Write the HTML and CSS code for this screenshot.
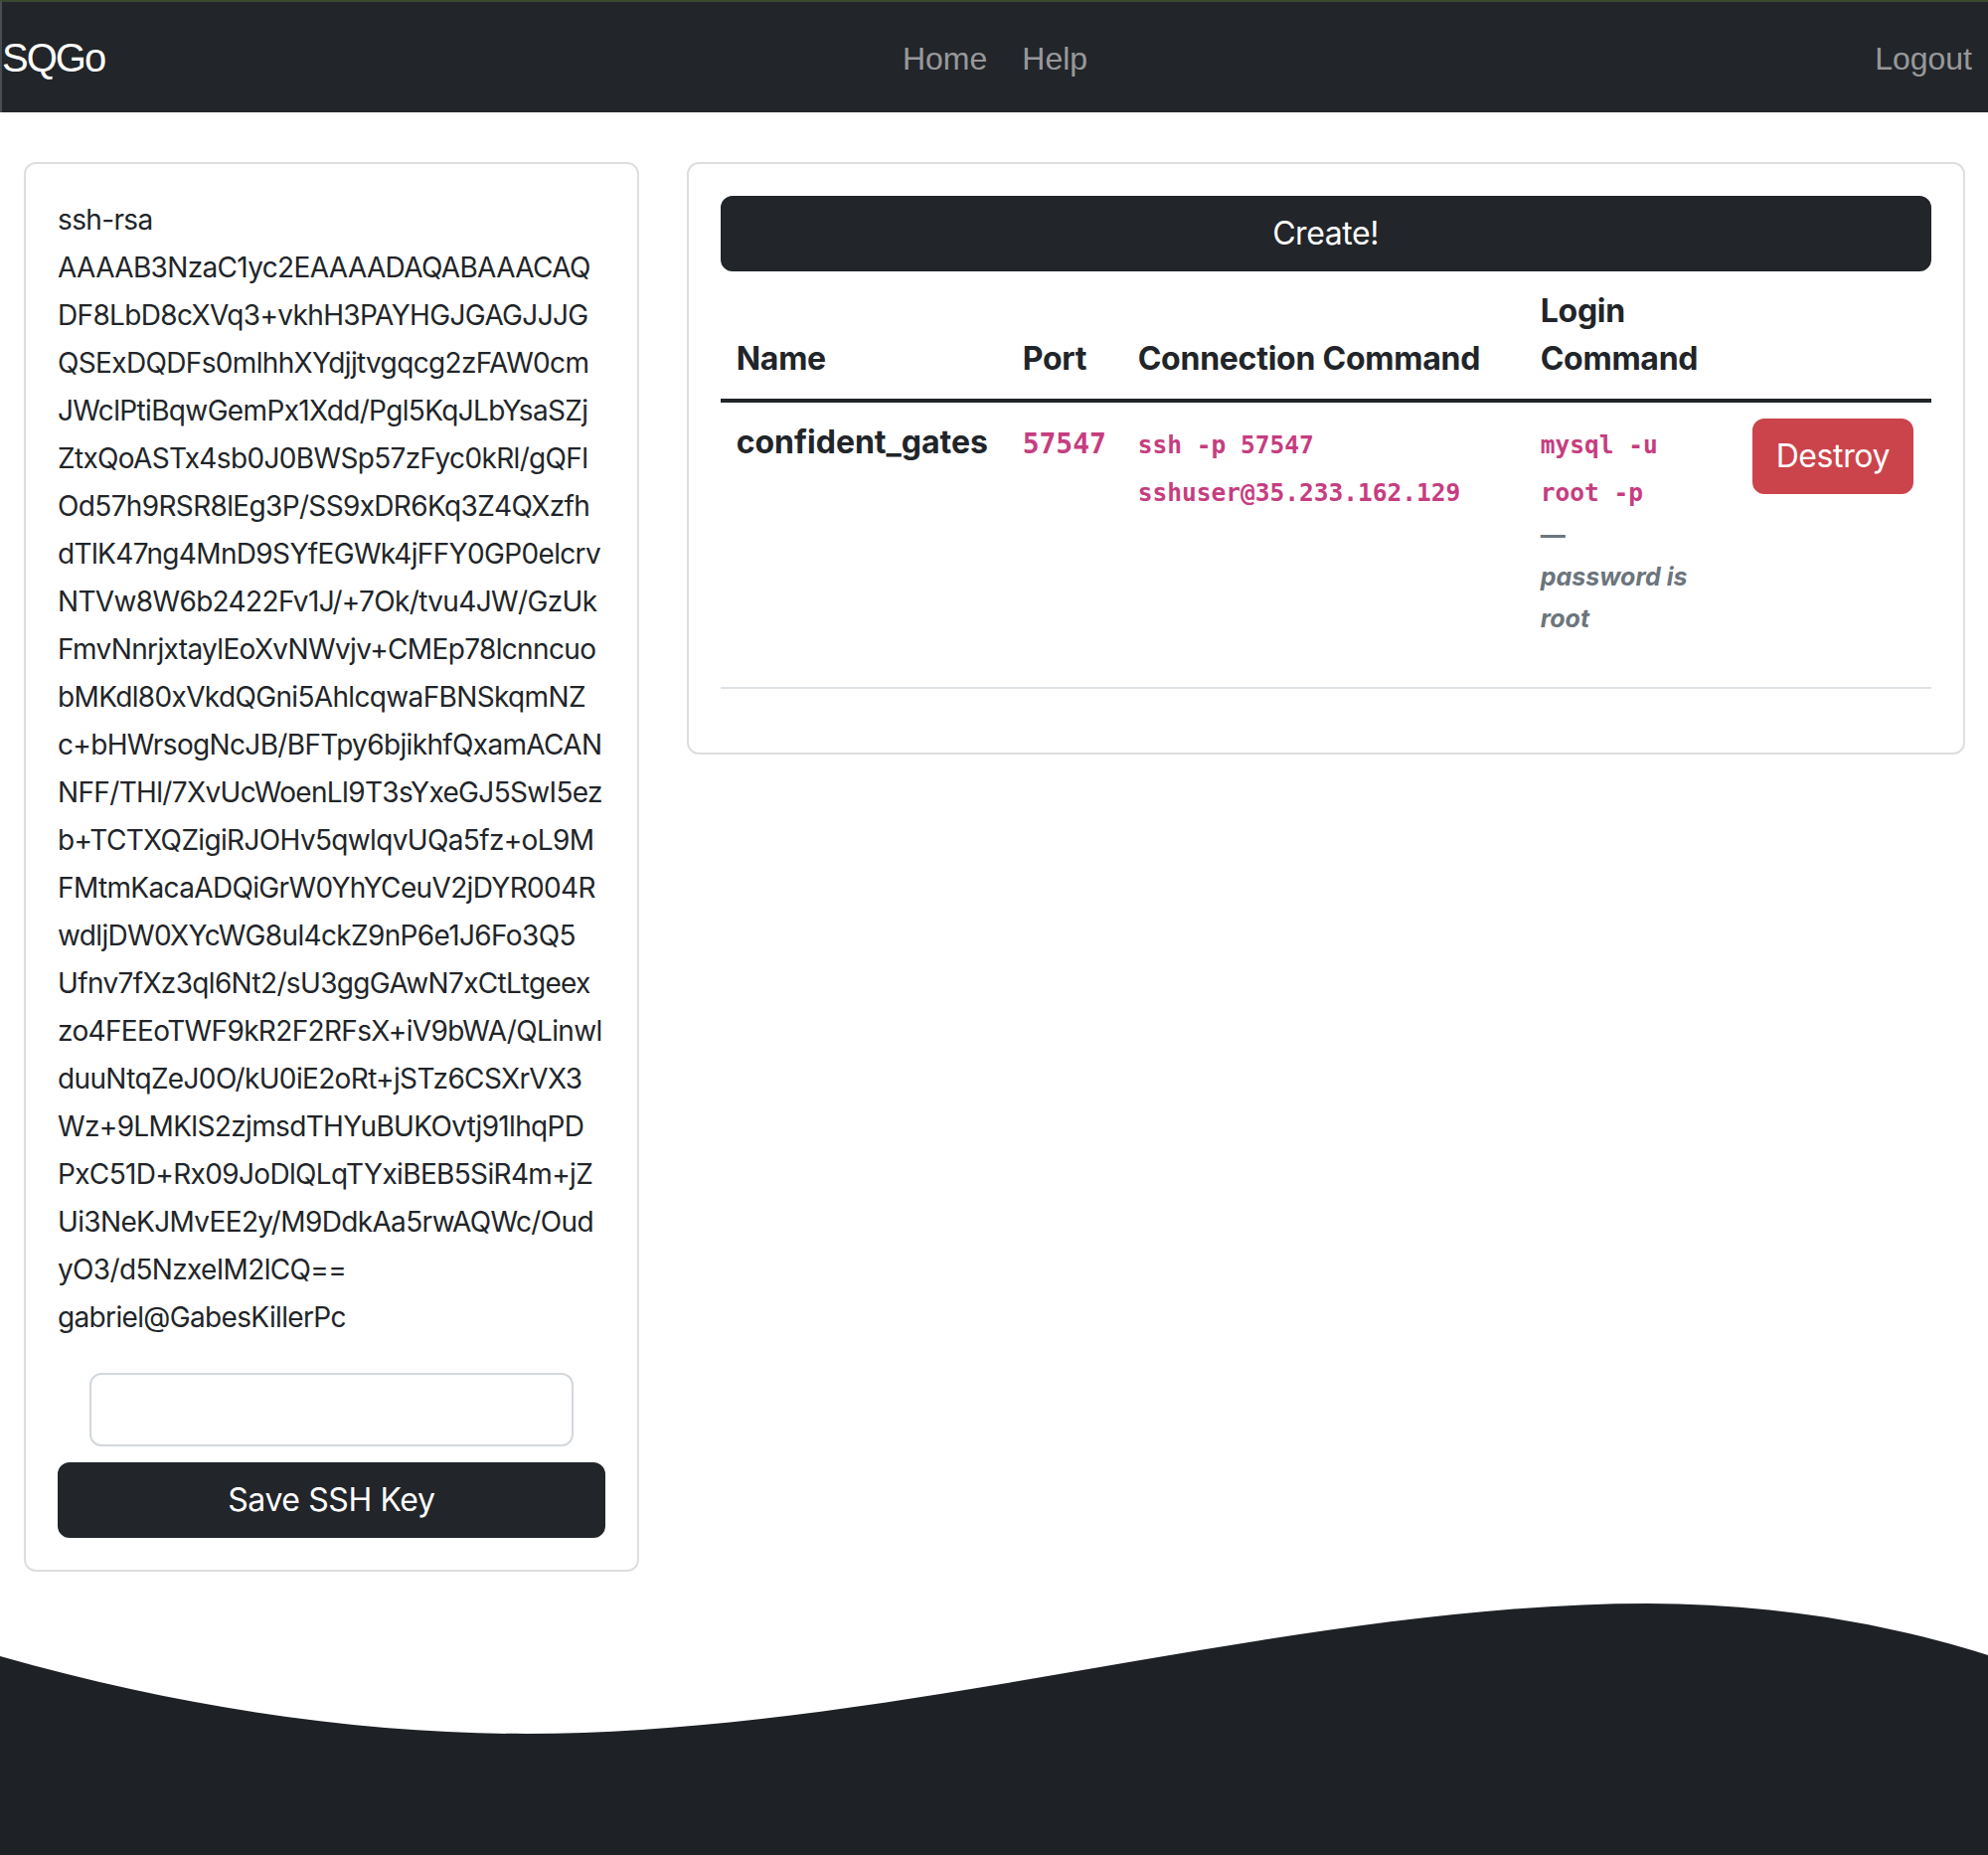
FILE: index.html
```html
<!DOCTYPE html>
<html lang="en">
<head>
<meta charset="utf-8">
<title>SQGo</title>
<link rel="stylesheet" href="styles.css">
</head>
<body>
<nav class="navbar">
  <a class="brand" href="#">SQGo</a>
  <div class="nav-center">
    <a class="nav-link" href="#">Home</a>
    <a class="nav-link" href="#">Help</a>
  </div>
  <div class="nav-right">
    <a class="nav-link" href="#">Logout</a>
  </div>
</nav>

<main class="content">
  <section class="card key-card">
    <p class="key-text">ssh-rsa<br>AAAAB3NzaC1yc2EAAAADAQABAAACAQ<br>DF8LbD8cXVq3+vkhH3PAYHGJGAGJJJG<br>QSExDQDFs0mlhhXYdjjtvgqcg2zFAW0cm<br>JWclPtiBqwGemPx1Xdd/Pgl5KqJLbYsaSZj<br>ZtxQoASTx4sb0J0BWSp57zFyc0kRl/gQFl<br>Od57h9RSR8lEg3P/SS9xDR6Kq3Z4QXzfh<br>dTlK47ng4MnD9SYfEGWk4jFFY0GP0elcrv<br>NTVw8W6b2422Fv1J/+7Ok/tvu4JW/GzUk<br>FmvNnrjxtaylEoXvNWvjv+CMEp78lcnncuo<br>bMKdl80xVkdQGni5AhlcqwaFBNSkqmNZ<br>c+bHWrsogNcJB/BFTpy6bjikhfQxamACAN<br>NFF/THl/7XvUcWoenLl9T3sYxeGJ5SwI5ez<br>b+TCTXQZigiRJOHv5qwlqvUQa5fz+oL9M<br>FMtmKacaADQiGrW0YhYCeuV2jDYR004R<br>wdljDW0XYcWG8ul4ckZ9nP6e1J6Fo3Q5<br>Ufnv7fXz3ql6Nt2/sU3ggGAwN7xCtLtgeex<br>zo4FEEoTWF9kR2F2RFsX+iV9bWA/QLinwl<br>duuNtqZeJ0O/kU0iE2oRt+jSTz6CSXrVX3<br>Wz+9LMKlS2zjmsdTHYuBUKOvtj91lhqPD<br>PxC51D+Rx09JoDlQLqTYxiBEB5SiR4m+jZ<br>Ui3NeKJMvEE2y/M9DdkAa5rwAQWc/Oud<br>yO3/d5NzxeIM2lCQ==<br>gabriel@GabesKillerPc</p>
    <form class="key-form">
      <input class="key-input" type="text" aria-label="SSH key">
      <button class="btn btn-dark" type="button">Save SSH Key</button>
    </form>
  </section>

  <section class="card db-card">
    <button class="btn btn-dark" type="button">Create!</button>
    <table class="db-table">
      <colgroup>
        <col class="c-name"><col class="c-port"><col class="c-conn"><col class="c-login"><col class="c-act">
      </colgroup>
      <thead>
        <tr>
          <th>Name</th>
          <th>Port</th>
          <th>Connection Command</th>
          <th>Login Command</th>
          <th></th>
        </tr>
      </thead>
      <tbody>
        <tr>
          <td>confident_gates</td>
          <td><code class="port">57547</code></td>
          <td><code class="cmd">ssh -p 57547 sshuser@35.233.162.129</code></td>
          <td>
            <code class="cmd">mysql -u root -p</code>
            <p class="note">—<br><em>password is root</em></p>
          </td>
          <td><button class="btn btn-danger" type="button">Destroy</button></td>
        </tr>
      </tbody>
    </table>
  </section>
</main>

<footer class="wave">
  <svg class="wave-svg" viewBox="0 0 2000 253" preserveAspectRatio="none" aria-hidden="true">
    <path d="M0,53 C200,110 380,131 529,131 C900,131 1300,0 1658,0 C1780,0 1900,20 2000,52 L2000,253 L0,253 Z" fill="#1e2126"/>
  </svg>
</footer>
</body>
</html>
```

FILE: styles.css
```css
* { box-sizing: border-box; }

html, body { margin: 0; padding: 0; }

body {
  min-height: 100vh;
  display: flex;
  flex-direction: column;
  background: #ffffff;
  color: #212529;
  font-family: Inter, "Noto Sans", "Liberation Sans", sans-serif;
  font-size: 32px;
  line-height: 48px;
}

/* ---------- navbar ---------- */
.navbar {
  height: 113px;
  background: #222529;
  border-top: 2px solid #3a4a2e;
  border-left: 2px solid #4a4e53;
  display: grid;
  grid-template-columns: 1fr auto 1fr;
  align-items: start;
  font-family: "Liberation Sans", Arial, sans-serif;
}

.brand {
  color: #ffffff;
  text-decoration: none;
  font-size: 40px;
  line-height: 60px;
  margin-top: 26px;
  letter-spacing: -2px;
  justify-self: start;
}

.nav-center {
  display: flex;
  gap: 3px;
  margin-top: 33px;
}

.nav-right {
  display: flex;
  justify-content: flex-end;
  margin-top: 33px;
}

.nav-link {
  color: rgba(255, 255, 255, 0.55);
  text-decoration: none;
  font-size: 32px;
  line-height: 48px;
  padding: 0 16px;
}

/* ---------- layout ---------- */
.content {
  display: grid;
  grid-template-columns: calc(33.3333% - 32px) 1fr;
  column-gap: 48px;
  align-items: start;
  padding: 50px 24px 0;
}

.card {
  border: 2px solid #dedede;
  border-radius: 12px;
  padding: 32px;
  background: #fff;
}

/* ---------- buttons ---------- */
.btn {
  display: block;
  border: 2px solid transparent;
  border-radius: 12px;
  font-family: Inter, "Noto Sans", sans-serif;
  font-size: 32px;
  line-height: 48px;
  letter-spacing: -0.4px;
  padding: 12px 22px;
  cursor: pointer;
}

.btn-dark {
  width: 100%;
  height: 76px;
  background: #222529;
  border-color: #222529;
  color: #ffffff;
}

.btn-danger {
  background: #cb444b;
  border-color: #cb444b;
  color: #ffffff;
  height: 76px;
}

/* ---------- key card ---------- */
.key-text {
  margin: 0 0 32px;
  font-size: 28px;
  line-height: 48px;
  letter-spacing: -0.65px;
}

.key-form {
  display: flex;
  flex-direction: column;
}

.key-input {
  display: block;
  width: 487px;
  height: 74px;
  margin: 0 auto 16px;
  border: 2px solid #d3d8dd;
  border-radius: 12px;
  background: #fff;
  font-size: 32px;
  padding: 12px 24px;
}

/* ---------- table ---------- */
.db-table {
  width: 100%;
  table-layout: fixed;
  border-collapse: separate;
  border-spacing: 0;
  margin-bottom: 32px;
}

.c-name { width: 288px; }
.c-port { width: 116px; }
.c-conn { width: 405px; }
.c-login { width: 213px; }
.c-act { width: 196px; }

.db-table th {
  text-align: left;
  vertical-align: bottom;
  font-weight: 700;
  letter-spacing: -0.25px;
  padding: 16px;
  border-bottom: 4px solid #212529;
}

.db-table td {
  vertical-align: top;
  font-weight: 700;
  padding: 16px;
  border-bottom: 2px solid #dee2e6;
}

code {
  font-family: "DejaVu Sans Mono", "Liberation Mono", monospace;
  color: #c63d80;
  font-weight: 700;
  line-height: 1;
}

.port { font-size: 28px; }
.cmd { font-size: 24.5px; }

.note {
  margin: 0 0 32px;
  color: #6c757d;
  font-size: 25px;
  line-height: 42px;
}

.note em { font-style: italic; }

/* ---------- footer wave ---------- */
.wave {
  margin-top: auto;
  height: 253px;
  line-height: 0;
}

.wave-svg {
  display: block;
  width: 100%;
  height: 253px;
}
```
